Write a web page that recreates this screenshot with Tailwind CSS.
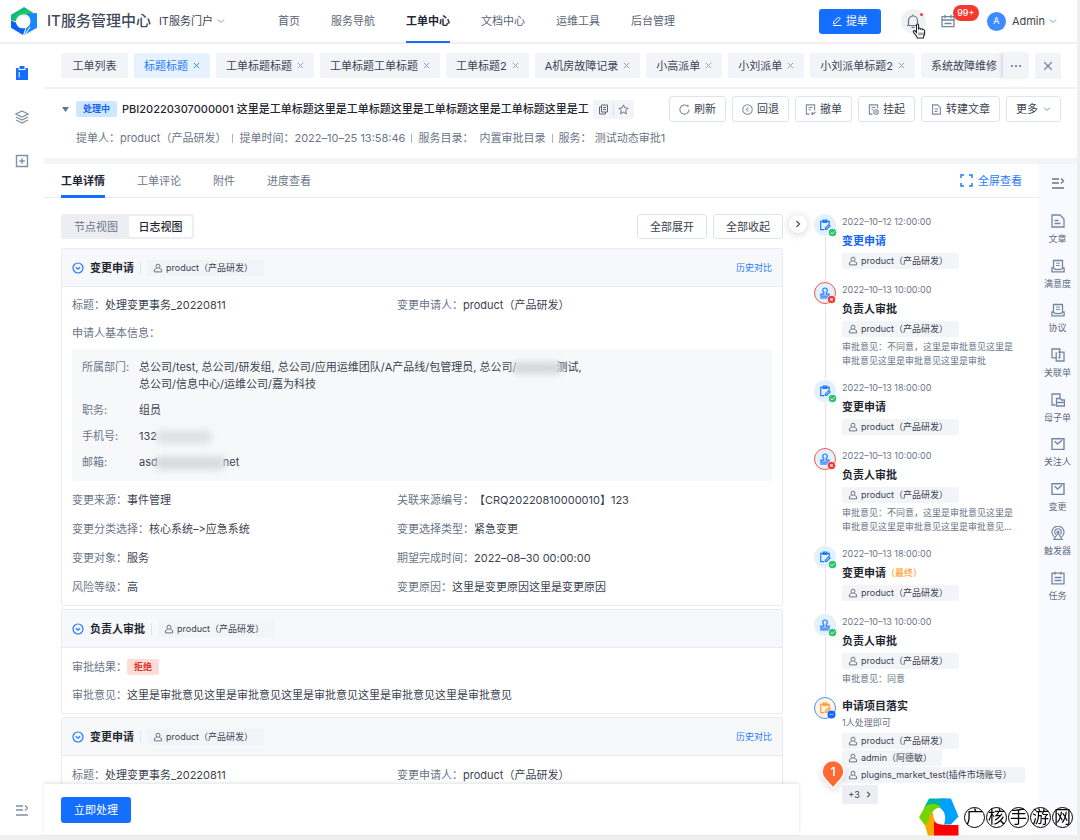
<!DOCTYPE html>
<html lang="zh-CN">
<head>
<meta charset="utf-8">
<title>IT服务管理中心</title>
<script src="https://cdn.jsdelivr.net/npm/@tailwindcss/browser@4"></script>
</head>
<body class="h-screen overflow-hidden bg-[#efeff0] pr-[3px] pb-[5px] font-['Inter','Noto_Sans_CJK_SC',sans-serif] text-[11px] leading-4 text-[#3b4350]">
<svg class="hidden">
  <symbol id="x" viewBox="0 0 8 8"><path d="M1 1l6 6M7 1l-6 6" fill="none" stroke="currentColor" stroke-width="1"/></symbol>
  <symbol id="down" viewBox="0 0 8 8"><path d="M1 2.5l3 3 3-3" fill="none" stroke="currentColor"/></symbol>
  <symbol id="right" viewBox="0 0 8 8"><path d="M2.5 1l3 3-3 3" fill="none" stroke="currentColor" stroke-width="1.2"/></symbol>
  <symbol id="user" viewBox="0 0 10 10"><g fill="none" stroke="currentColor" stroke-width="1"><circle cx="5" cy="3.2" r="2"/><path d="M3.7 5.2L1.4 6.6v2.3h7.2V6.6L6.3 5.2"/></g></symbol>
  <symbol id="fold" viewBox="0 0 12 12"><g fill="none" stroke="currentColor" stroke-width="1.2"><circle cx="6" cy="6" r="5"/><path d="M3.8 5.2L6 7.2l2.2-2"/></g></symbol>
  <symbol id="collapse" viewBox="0 0 14 14"><path d="M1 3h7M1 7h7M1 12h12M10 2.5L12.5 5 10 7.5" fill="none" stroke="currentColor" stroke-width="1.3"/></symbol>
  <symbol id="apply" viewBox="0 0 14 14"><g fill="none" stroke="currentColor" stroke-width="1.4"><path d="M6 12.3H2V2.7h10V6"/><path d="M4.8 1.3h4.4v2.6H4.8zM7.4 10.6l4-4 1.5 1.5-4 4H7.4z"/></g></symbol>
  <symbol id="stamp" viewBox="0 0 14 14"><g fill="none" stroke="currentColor" stroke-width="1.4"><path d="M5.6 8.2V6.2a2.7 2.7 0 1 1 2.8 0v2h3.4v2.5H2.2V8.2z"/><path d="M1.4 12.8h11.2"/></g></symbol>
  <symbol id="ok" viewBox="0 0 10 10"><circle cx="5" cy="5" r="4.5" fill="#2dc26b" stroke="#fff" stroke-width=".8"/><path d="M3 5l1.5 1.5L7.2 3.8" fill="none" stroke="#fff" stroke-width="1.1"/></symbol>
  <symbol id="no" viewBox="0 0 10 10"><circle cx="5" cy="5" r="4.5" fill="#f5392f" stroke="#fff" stroke-width=".8"/><path d="M3.7 3.7l2.6 2.6M6.3 3.7L3.7 6.3" stroke="#fff" stroke-width="1.2"/></symbol>
  <symbol id="todo" viewBox="0 0 10 10"><circle cx="5" cy="5" r="4.5" fill="#1369ff"/><path d="M2.6 5h4.8" stroke="#8fb8ff"/></symbol>
  <symbol id="tray" viewBox="0 0 14 14"><g fill="none" stroke="currentColor" stroke-width="1.3"><path d="M2.5 9.500v-8h9v8M2.500 9H.9v3.800h12.200V9h-1.600M2.500 9.500c2 1.400 7 1.400 9 0"/><path d="M5 4.200h4M5 6.500h4" stroke-width=".9"/></g></symbol>
  <symbol id="mail" viewBox="0 0 14 14"><path d="M1 1.8h12v10.6H1zM3.6 4.2L6.6 7 11 3.2" fill="none" stroke="currentColor" stroke-width="1.4"/></symbol>
</svg>

<div class="flex h-full flex-col bg-white">
  <header class="flex h-[44px] shrink-0 items-center border-b-2 border-[#f0f0f1] pl-[10px] pr-5">
    <svg class="size-[28px] shrink-0" viewBox="0 0 28 28">
      <path d="M1 8L14 .3l9 5.2-3.5 4.2C14 6 7 8.500 6 14.500L1 13z" fill="#22c55e"/>
      <path d="M1 8L14 .3l4.200 2.500C11 3 5 8 4 13.800L1 13z" fill="#0fb981"/>
      <path d="M1 13.500l5 2c1 5 5 6.500 9.500 5.500L13 28 1 20.800z" fill="#0b62f5"/>
      <path d="M16.500 6.500l9.800-.6c.5.3.7.7.7 1.200v13.600L14.300 28l2-7c5-2.500 6-9.500.2-14.500z" fill="#1c86ff"/>
      <path d="M20 20l-4.500 7" stroke="#fff" stroke-width="1"/>
      <path d="M6.500 14.500c.5-5 6-8 11-5.500" fill="none" stroke="#d9ecff" stroke-width="1.500"/>
    </svg>
    <h1 class="ml-[9px] shrink-0 whitespace-nowrap text-[15px] font-medium leading-5 text-[#3f4a5c]">IT服务管理中心</h1>
    <button class="ml-2 flex shrink-0 items-center gap-1 whitespace-nowrap">IT服务门户 <svg class="size-2 text-[#8693a8]"><use href="#down"/></svg></button>
    <nav class="ml-[53px] flex h-[44px] items-center gap-[31px] whitespace-nowrap text-[#5b6575]">
      <a href="#">首页</a><a href="#">服务导航</a>
      <a href="#" class="flex h-full items-center border-y-2 border-t-transparent border-b-[#1a6dff] font-bold text-[#1f2733]">工单中心</a>
      <a href="#">文档中心</a><a href="#">运维工具</a><a href="#">后台管理</a>
    </nav>
    <button class="ml-auto flex h-[25px] w-[62px] shrink-0 items-center justify-center gap-1 rounded-[3px] bg-[#146eff] text-white"><svg class="size-[10px]" viewBox="0 0 10 10" fill="none" stroke="currentColor"><path d="M1.500 6L6.500 1l1.800 1.800-5 5H1.500zM1 9.500h8.500"/></svg>提单</button>
    <button class="relative ml-5 flex size-[25px] shrink-0 items-center justify-center rounded-full bg-[#f0f1f3] text-[#66748a]" aria-label="通知">
      <svg class="size-[14px]" viewBox="0 0 14 14" fill="none" stroke="currentColor" stroke-width="1.200"><path d="M1 11.500h12M2.500 11.500V6.500a4.500 4.500 0 0 1 9 0v5M7 2V.5M5.500 13.300h3"/></svg>
      <span class="absolute right-[3px] top-1 size-[3px] rounded-full bg-[#f5392f]"></span>
      <svg class="absolute left-[11px] top-[14px] h-[16px] w-[15px]" viewBox="0 0 15 16"><path d="M4.500 9.500V2.200c0-1.600 2.100-1.600 2.100 0v3.600c.6-.8 1.900-.6 2.100.3.600-.6 1.800-.4 2 .5.800-.4 1.900.1 1.900 1.200v3c0 1.800-1.200 2.300-1.200 4.200H5.300C5 13 2.800 11.500 1.500 9.300.8 8 2.300 7 3.300 8.100z" fill="#fff" stroke="#222" stroke-width="1.100"/><path d="M7 9.500v2.800M9 9.500v2.800M11 9.500v2.800" stroke="#222" stroke-width=".8"/></svg>
    </button>
    <button class="relative ml-[15px] shrink-0 text-[#7484a0]" aria-label="日程">
      <svg class="size-[14px]" viewBox="0 0 14 14" fill="none" stroke="currentColor" stroke-width="1.300"><path d="M1 2.700h12v10H1zM1 6h12M4 .7v3.500M10 .7v3.500M3.500 9.500h7"/></svg>
      <span class="absolute -top-[9px] left-3 flex h-4 w-[26px] items-center justify-center rounded-full bg-[#f5392f] text-[9px] font-medium text-white">99+</span>
    </button>
    <span class="ml-8 flex size-[19px] shrink-0 items-center justify-center rounded-full bg-[#3d8bff] text-[9px] text-white">A</span>
    <button class="ml-[6px] flex items-center gap-1">Admin <svg class="size-2 text-[#8693a8]"><use href="#down"/></svg></button>
  </header>

  <div class="flex min-h-0 flex-1">
    <aside class="flex w-[44px] shrink-0 flex-col items-center gap-[30px] pb-[18px] pt-[22px] text-[#8090a8]">
      <button aria-label="工单" class="text-[#146eff]"><svg class="size-[14px]" viewBox="0 0 14 14" fill="currentColor"><path d="M1 2h2.500v2h7V2H13v12H1z"/><path d="M4.500 0h5v3h-5z"/><path d="M4.200 6v5.500" stroke="#fff"/></svg></button>
      <button aria-label="图层"><svg class="size-[14px]" viewBox="0 0 14 14" fill="none" stroke="currentColor" stroke-width="1.200"><path d="M7 1l6 3-6 3-6-3zM1 7l6 3 6-3M1 10l6 3 6-3"/></svg></button>
      <button aria-label="新增"><svg class="size-[14px]" viewBox="0 0 14 14" fill="none" stroke="currentColor" stroke-width="1.400"><path d="M1.500 1.500h11v11h-11zM7 4.300v5.400M4.300 7h5.400"/></svg></button>
      <button aria-label="展开菜单" class="mt-auto"><svg class="size-[14px]"><use href="#collapse"/></svg></button>
    </aside>

    <div class="flex min-w-0 flex-1 flex-col">
      <div class="flex h-[45px] shrink-0 items-center border-b-2 border-[#f0f1f4] pl-[17px] pr-4">
        <div class="flex min-w-0 flex-1 gap-[6px] overflow-hidden whitespace-nowrap *:flex *:h-[25px] *:shrink-0 *:items-center *:gap-[5px] *:rounded-xs *:bg-[#f3f4f8] *:px-[10px]">
          <button class="w-[67px] justify-center">工单列表</button>
          <button class="bg-[#e6f2ff]! text-[#1f7aff]">标题标题<svg class="size-[7px]"><use href="#x"/></svg></button>
          <button>工单标题标题<svg class="size-[7px] text-[#8693a8]"><use href="#x"/></svg></button>
          <button>工单标题工单标题<svg class="size-[7px] text-[#8693a8]"><use href="#x"/></svg></button>
          <button>工单标题2<svg class="size-[7px] text-[#8693a8]"><use href="#x"/></svg></button>
          <button>A机房故障记录<svg class="size-[7px] text-[#8693a8]"><use href="#x"/></svg></button>
          <button>小高派单<svg class="size-[7px] text-[#8693a8]"><use href="#x"/></svg></button>
          <button>小刘派单<svg class="size-[7px] text-[#8693a8]"><use href="#x"/></svg></button>
          <button>小刘派单标题2<svg class="size-[7px] text-[#8693a8]"><use href="#x"/></svg></button>
          <button>系统故障维修<svg class="size-[7px] text-[#8693a8]"><use href="#x"/></svg></button>
        </div>
        <button aria-label="更多标签" class="z-10 flex h-[25px] w-[26px] shrink-0 items-center justify-center bg-[#f3f4f8] text-[#8390a6] shadow-[-2px_0_3px_rgba(0,0,0,0.1)]"><svg class="h-[2px] w-[10px]" viewBox="0 0 10 2" fill="currentColor"><path d="M0 0h2v2H0zM4 0h2v2H4zM8 0h2v2H8z"/></svg></button>
        <button aria-label="关闭" class="ml-[6px] flex h-[26px] w-[26px] shrink-0 items-center justify-center bg-[#f3f4f8] text-[#76849c]"><svg class="size-[10px]"><use href="#x"/></svg></button>
      </div>

      <section class="flex h-[75px] shrink-0 flex-col gap-2 border-b-[6px] border-[#f3f4f8] pl-[18px] pr-4 pt-[7px]">
        <div class="flex items-center whitespace-nowrap">
          <svg class="h-[5px] w-[7px] shrink-0" viewBox="0 0 7 5"><path d="M0 0h7L3.500 5z" fill="#66748a"/></svg>
          <span class="ml-[7px] flex h-4 w-[41px] shrink-0 items-center justify-center rounded-xs bg-[#cfe6ff] text-[9px] font-bold text-[#1464f0]">处理中</span>
          <h2 class="ml-[5px] shrink-0 font-medium text-[#1f2733]">PBI20220307000001 这里是工单标题这里是工单标题这里是工单标题这里是工单标题这里是工</h2>
          <div class="ml-1 flex h-[19px] shrink-0 items-center rounded-xs bg-[#f3f4f8] px-[5px] text-[#5d6879]">
            <button aria-label="复制"><svg class="size-[11px]" viewBox="0 0 11 11" fill="none" stroke="currentColor"><path d="M3.500 1h6v7h-6zM3.500 3h-2v7h6V8M5 3.500h3M5 5.500h3"/></svg></button>
            <span class="mx-1 h-3 w-px bg-[#dde1e8]"></span>
            <button aria-label="收藏"><svg class="size-[11px]" viewBox="0 0 12 12" fill="none" stroke="currentColor"><path d="M6 1l1.500 3.200 3.500.5-2.500 2.500.6 3.500L6 9l-3.100 1.700.6-3.500L1 4.700l3.500-.5z"/></svg></button>
          </div>
          <div class="ml-auto flex gap-[6px] *:flex *:h-[26px] *:items-center *:gap-1 *:rounded-[3px] *:border *:border-[#dfe4ec] *:px-[9px]">
            <button><svg class="size-[11px] text-[#7c8aa0]" viewBox="0 0 12 12" fill="none" stroke="currentColor" stroke-width="1.200"><path d="M11 6a5 5 0 1 1-1.500-3.500M9.800.8v2.400"/></svg>刷新</button>
            <button><svg class="size-[11px] text-[#7c8aa0]" viewBox="0 0 12 12" fill="none" stroke="currentColor" stroke-width="1.100"><circle cx="6" cy="6" r="5.200"/><path d="M7 3.800L4.800 6 7 8.200"/></svg>回退</button>
            <button><svg class="size-[11px] text-[#7c8aa0]" viewBox="0 0 12 12" fill="none" stroke="currentColor" stroke-width="1.200"><path d="M5 11H1.500V1h9v6M3.800 3.800h4.500M3.800 6.300h3M7 10.500h2.500l2-2M7 10.500L8.500 9M7 10.500L8.500 12"/></svg>撤单</button>
            <button><svg class="size-[11px] text-[#7c8aa0]" viewBox="0 0 12 12" fill="none" stroke="currentColor" stroke-width="1.200"><path d="M5 11H1.500V1h9v4M3.800 3.800h4.500M3.800 6.300h2"/><circle cx="8.700" cy="8.700" r="2.500"/><path d="M7.500 8.700h2.400"/></svg>挂起</button>
            <button><svg class="size-[11px] text-[#7c8aa0]" viewBox="0 0 12 12" fill="none" stroke="currentColor" stroke-width="1.200"><path d="M1.700 1h5.600l3 3v7H1.700zM4 5.500h4M4 8h3"/></svg>转建文章</button>
            <button>更多<svg class="ml-px size-2 text-[#8693a8]"><use href="#down"/></svg></button>
          </div>
        </div>
        <div class="flex items-center gap-[6px] whitespace-nowrap pl-[14px] text-[#6b7586]">
          <span>提单人：product（产品研发）</span><span class="h-[9px] w-px bg-[#a9b2c0]"></span>
          <span>提单时间：2022–10–25 13:58:46</span><span class="h-[9px] w-px bg-[#a9b2c0]"></span>
          <span>服务目录：&nbsp; 内置审批目录</span><span class="h-[9px] w-px bg-[#a9b2c0]"></span>
          <span>服务： 测试动态审批1</span>
        </div>
      </section>

      <div class="flex min-h-0 flex-1">
        <div class="flex min-w-0 flex-1 flex-col">
          <div class="flex h-[34px] shrink-0 items-center gap-8 border-b border-[#e9ebf0] pl-[17px] pr-4 text-[#6b7586]">
            <a href="#" class="flex h-[34px] items-center border-y-[3px] border-t-transparent border-b-[#146eff] font-bold text-[#1f2733]">工单详情</a>
            <a href="#">工单评论</a><a href="#">附件</a><a href="#">进度查看</a>
            <a href="#" class="ml-auto flex items-center gap-[5px] text-[#1f7aff]"><svg class="size-[13px]" viewBox="0 0 13 13" fill="none" stroke="currentColor" stroke-width="1.500"><path d="M1 4V1h3M9 1h3v3M12 9v3H9M4 12H1V9"/></svg>全屏查看</a>
          </div>

          <div class="flex min-h-0 flex-1">
            <main class="relative flex min-w-0 flex-1 flex-col">
              <div class="flex min-h-0 flex-1 flex-col gap-[3px] overflow-hidden pl-[17px] pr-4 pt-4">
                <div class="mb-[6px] flex shrink-0 items-center gap-[6px]">
                  <div class="mr-auto flex h-[25px] items-center rounded-[3px] bg-[#eceef3] p-[2px] text-[#6b7586]">
                    <button class="w-[66px]">节点视图</button>
                    <button class="h-full w-[63px] rounded-xs bg-white font-medium text-[#1f2733]">日志视图</button>
                  </div>
                  <button class="h-[25px] w-[70px] rounded-[3px] border border-[#dfe4ec]">全部展开</button>
                  <button class="h-[25px] w-[70px] rounded-[3px] border border-[#dfe4ec]">全部收起</button>
                </div>

                <article class="shrink-0 rounded-xs border border-[#e8ebf0] pb-1">
                  <header class="flex h-[38px] items-center border-b border-[#e8ebf0] bg-[#f7f8fa] px-[10px]">
                    <svg class="size-3 text-[#1f7aff]"><use href="#fold"/></svg>
                    <h3 class="ml-[6px] font-bold text-[#1f2733]">变更申请</h3>
                    <span class="ml-[6px] h-3 w-px bg-[#dfe3ea]"></span>
                    <span class="ml-[6px] flex h-4 w-[117px] items-center gap-[3px] rounded-xs bg-[#f3f4f8] pl-[6px] text-[9px]"><svg class="size-[10px] text-[#6b7586]"><use href="#user"/></svg>product（产品研发）</span>
                    <a href="#" class="ml-auto text-[9px] text-[#1f7aff]">历史对比</a>
                  </header>
                  <div class="px-[10px] pt-1">
                    <dl class="grid grid-cols-[325px_1fr] *:flex *:h-7 *:items-center">
                      <div><dt class="text-[#6b7586]">标题：</dt><dd>处理变更事务_20220811</dd></div>
                      <div><dt class="text-[#6b7586]">变更申请人：</dt><dd>product（产品研发）</dd></div>
                      <div><dt class="text-[#6b7586]">申请人基本信息：</dt></div>
                    </dl>
                    <dl class="mt-[2px] grid grid-cols-[57px_1fr] gap-y-[9px] rounded-xs bg-[#f7f8fa] px-[10px] py-[10px] leading-[17px]">
                      <dt class="text-[#6b7586]">所属部门:</dt>
                      <dd>总公司/test, 总公司/研发组, 总公司/应用运维团队/A产品线/包管理员, 总公司/<span class="-ml-1 -mr-[6px] inline-block h-3 w-[50px] rounded-full bg-[#d5d9dc] align-middle blur-[3px]"></span>测试,<br>总公司/信息中心/运维公司/嘉为科技</dd>
                      <dt class="text-[#6b7586]">职务:</dt><dd>组员</dd>
                      <dt class="text-[#6b7586]">手机号:</dt><dd class="flex items-center">132<span class="-ml-px h-[14px] w-[56px] rounded-full bg-[#dfe2e5] blur-[3px]"></span></dd>
                      <dt class="text-[#6b7586]">邮箱:</dt><dd class="flex items-center">asd<span class="-ml-1 -mr-[3px] h-[14px] w-[72px] rounded-full bg-[#d9dcdf] blur-[3px]"></span>net</dd>
                    </dl>
                    <dl class="mt-1 grid grid-cols-[325px_1fr] [font-variant-ligatures:none] *:flex *:h-[29px] *:items-center">
                      <div><dt class="text-[#6b7586]">变更来源：</dt><dd>事件管理</dd></div>
                      <div><dt class="text-[#6b7586]">关联来源编号：</dt><dd>【CRQ20220810000010】123</dd></div>
                      <div><dt class="text-[#6b7586]">变更分类选择：</dt><dd>核心系统–&gt;应急系统</dd></div>
                      <div><dt class="text-[#6b7586]">变更选择类型：</dt><dd>紧急变更</dd></div>
                      <div><dt class="text-[#6b7586]">变更对象：</dt><dd>服务</dd></div>
                      <div><dt class="text-[#6b7586]">期望完成时间：</dt><dd>2022–08–30 00:00:00</dd></div>
                      <div><dt class="text-[#6b7586]">风险等级：</dt><dd>高</dd></div>
                      <div><dt class="text-[#6b7586]">变更原因：</dt><dd>这里是变更原因这里是变更原因</dd></div>
                    </dl>
                  </div>
                </article>

                <article class="shrink-0 rounded-xs border border-[#e8ebf0] pb-1">
                  <header class="flex h-[38px] items-center border-b border-[#e8ebf0] bg-[#f7f8fa] px-[10px]">
                    <svg class="size-3 text-[#1f7aff]"><use href="#fold"/></svg>
                    <h3 class="ml-[6px] font-bold text-[#1f2733]">负责人审批</h3>
                    <span class="ml-[6px] h-3 w-px bg-[#dfe3ea]"></span>
                    <span class="ml-[6px] flex h-4 w-[117px] items-center gap-[3px] rounded-xs bg-[#f3f4f8] pl-[6px] text-[9px]"><svg class="size-[10px] text-[#6b7586]"><use href="#user"/></svg>product（产品研发）</span>
                  </header>
                  <dl class="px-[10px] pt-[5px] *:flex *:h-7 *:items-center">
                    <div><dt class="text-[#6b7586]">审批结果：</dt><dd class="flex h-4 w-8 items-center justify-center rounded-xs bg-[#ffdcd6] text-[9px] font-bold text-[#d9352c]">拒绝</dd></div>
                    <div><dt class="text-[#6b7586]">审批意见：</dt><dd>这里是审批意见这里是审批意见这里是审批意见这里是审批意见这里是审批意见</dd></div>
                  </dl>
                </article>

                <article class="shrink-0 rounded-xs border border-[#e8ebf0]">
                  <header class="flex h-[38px] items-center border-b border-[#e8ebf0] bg-[#f7f8fa] px-[10px]">
                    <svg class="size-3 text-[#1f7aff]"><use href="#fold"/></svg>
                    <h3 class="ml-[6px] font-bold text-[#1f2733]">变更申请</h3>
                    <span class="ml-[6px] h-3 w-px bg-[#dfe3ea]"></span>
                    <span class="ml-[6px] flex h-4 w-[117px] items-center gap-[3px] rounded-xs bg-[#f3f4f8] pl-[6px] text-[9px]"><svg class="size-[10px] text-[#6b7586]"><use href="#user"/></svg>product（产品研发）</span>
                    <a href="#" class="ml-auto text-[9px] text-[#1f7aff]">历史对比</a>
                  </header>
                  <dl class="grid grid-cols-[325px_1fr] px-[10px] pt-[5px] *:flex *:h-7 *:items-center">
                    <div><dt class="text-[#6b7586]">标题：</dt><dd>处理变更事务_20220811</dd></div>
                    <div><dt class="text-[#6b7586]">变更申请人：</dt><dd>product（产品研发）</dd></div>
                  </dl>
                </article>
              </div>
              <footer class="z-10 flex h-[51px] shrink-0 items-center bg-white pl-[17px] shadow-[0_-1px_4px_rgba(0,0,0,0.12)]">
                <button class="h-[26px] w-[70px] rounded-[3px] bg-[#146eff] text-white">立即处理</button>
              </footer>
              <button aria-label="收起流程" class="absolute -right-2 top-[17px] z-20 flex size-[18px] items-center justify-center rounded-full bg-white text-[#4a5361] shadow-[0_1px_8px_rgba(0,0,0,0.18)]"><svg class="size-2"><use href="#right"/></svg></button>
            </main>

            <ol class="w-[239px] shrink-0 overflow-hidden pl-[15px] pt-4 text-[9px] leading-[14px] text-[#6b7586] *:flex *:gap-[6px]">
              <li class="h-[68px]">
                <div class="flex w-[22px] flex-col items-center"><span class="relative flex size-[22px] shrink-0 items-center justify-center rounded-full bg-[#e3f0ff] text-[#1f7aff]"><svg class="size-3"><use href="#apply"/></svg><svg class="absolute -bottom-px -right-px size-[9px]"><use href="#ok"/></svg></span><span class="my-px w-px flex-1 bg-[#dfe5ee]"></span></div>
                <div><time class="flex h-4 items-center">2022–10–12 12:00:00</time><h4 class="flex h-[22px] items-center text-[11px] font-bold text-[#1464f0]">变更申请</h4><span class="mt-px flex h-4 w-[117px] items-center gap-[3px] rounded-xs bg-[#f3f4f8] pl-[6px] text-[#3b4350]"><svg class="size-[10px] text-[#6b7586]"><use href="#user"/></svg>product（产品研发）</span></div>
              </li>
              <li class="h-[98px]">
                <div class="flex w-[22px] flex-col items-center"><span class="relative flex size-[22px] shrink-0 items-center justify-center rounded-full border border-[#f5564d] bg-[#e3f0ff] text-[#1f7aff]"><svg class="size-3"><use href="#stamp"/></svg><svg class="absolute -bottom-px -right-px size-[9px]"><use href="#no"/></svg></span><span class="my-px w-px flex-1 bg-[#dfe5ee]"></span></div>
                <div><time class="flex h-4 items-center">2022–10–13 10:00:00</time><h4 class="flex h-[22px] items-center text-[11px] font-bold text-[#1f2733]">负责人审批</h4><span class="mb-[3px] mt-px flex h-4 w-[117px] items-center gap-[3px] rounded-xs bg-[#f3f4f8] pl-[6px] text-[#3b4350]"><svg class="size-[10px] text-[#6b7586]"><use href="#user"/></svg>product（产品研发）</span><p>审批意见：不同意，这里是审批意见这里是<br>审批意见这里是审批意见这里是审批</p></div>
              </li>
              <li class="h-[68px]">
                <div class="flex w-[22px] flex-col items-center"><span class="relative flex size-[22px] shrink-0 items-center justify-center rounded-full bg-[#e3f0ff] text-[#1f7aff]"><svg class="size-3"><use href="#apply"/></svg><svg class="absolute -bottom-px -right-px size-[9px]"><use href="#ok"/></svg></span><span class="my-px w-px flex-1 bg-[#dfe5ee]"></span></div>
                <div><time class="flex h-4 items-center">2022–10–13 18:00:00</time><h4 class="flex h-[22px] items-center text-[11px] font-bold text-[#1f2733]">变更申请</h4><span class="mt-px flex h-4 w-[117px] items-center gap-[3px] rounded-xs bg-[#f3f4f8] pl-[6px] text-[#3b4350]"><svg class="size-[10px] text-[#6b7586]"><use href="#user"/></svg>product（产品研发）</span></div>
              </li>
              <li class="h-[98px]">
                <div class="flex w-[22px] flex-col items-center"><span class="relative flex size-[22px] shrink-0 items-center justify-center rounded-full border border-[#f5564d] bg-[#e3f0ff] text-[#1f7aff]"><svg class="size-3"><use href="#stamp"/></svg><svg class="absolute -bottom-px -right-px size-[9px]"><use href="#no"/></svg></span><span class="my-px w-px flex-1 bg-[#dfe5ee]"></span></div>
                <div><time class="flex h-4 items-center">2022–10–13 10:00:00</time><h4 class="flex h-[22px] items-center text-[11px] font-bold text-[#1f2733]">负责人审批</h4><span class="mb-[3px] mt-px flex h-4 w-[117px] items-center gap-[3px] rounded-xs bg-[#f3f4f8] pl-[6px] text-[#3b4350]"><svg class="size-[10px] text-[#6b7586]"><use href="#user"/></svg>product（产品研发）</span><p>审批意见：不同意，这里是审批意见这里是<br>审批意见这里是审批意见这里是审批意见...</p></div>
              </li>
              <li class="h-[68px]">
                <div class="flex w-[22px] flex-col items-center"><span class="relative flex size-[22px] shrink-0 items-center justify-center rounded-full bg-[#e3f0ff] text-[#1f7aff]"><svg class="size-3"><use href="#apply"/></svg><svg class="absolute -bottom-px -right-px size-[9px]"><use href="#ok"/></svg></span><span class="my-px w-px flex-1 bg-[#dfe5ee]"></span></div>
                <div><time class="flex h-4 items-center">2022–10–13 18:00:00</time><h4 class="flex h-[22px] items-center text-[11px] font-bold text-[#1f2733]">变更申请<span class="text-[9px] font-medium text-[#ff9f38]">（最终）</span></h4><span class="mt-px flex h-4 w-[117px] items-center gap-[3px] rounded-xs bg-[#f3f4f8] pl-[6px] text-[#3b4350]"><svg class="size-[10px] text-[#6b7586]"><use href="#user"/></svg>product（产品研发）</span></div>
              </li>
              <li class="h-[83px]">
                <div class="flex w-[22px] flex-col items-center"><span class="relative flex size-[22px] shrink-0 items-center justify-center rounded-full bg-[#e3f0ff] text-[#1f7aff]"><svg class="size-3"><use href="#stamp"/></svg><svg class="absolute -bottom-px -right-px size-[9px]"><use href="#ok"/></svg></span><span class="my-px w-px flex-1 bg-[#dfe5ee]"></span></div>
                <div><time class="flex h-4 items-center">2022–10–13 10:00:00</time><h4 class="flex h-[22px] items-center text-[11px] font-bold text-[#1f2733]">负责人审批</h4><span class="mb-[3px] mt-px flex h-4 w-[117px] items-center gap-[3px] rounded-xs bg-[#f3f4f8] pl-[6px] text-[#3b4350]"><svg class="size-[10px] text-[#6b7586]"><use href="#user"/></svg>product（产品研发）</span><p>审批意见：同意</p></div>
              </li>
              <li>
                <div class="relative w-[22px]"><span class="relative flex size-[22px] items-center justify-center rounded-full border border-[#4c92ff] bg-[#fff3e3] text-[#ff9f38]"><svg class="size-3"><use href="#apply"/></svg><svg class="absolute -bottom-px -right-px size-[9px]"><use href="#todo"/></svg></span>
                  <svg class="absolute left-[6px] top-[62px] z-10 h-[32px] w-[26px] drop-shadow-md" viewBox="0 0 26 32"><path d="M13 29L5 20a11 11 0 1 1 16 0z" fill="#ff6a33" stroke="#fff" stroke-width="1.500"/><text x="13" y="17" text-anchor="middle" font-size="12" font-weight="600" fill="#fff">1</text></svg>
                </div>
                <div class="flex flex-col items-start gap-px text-[#3b4350]">
                  <h4 class="flex h-[18px] items-center text-[11px] font-bold text-[#1f2733]">申请项目落实</h4>
                  <p class="h-4 text-[#6b7586]">1人处理即可</p>
                  <span class="flex h-4 w-[117px] items-center gap-[3px] rounded-xs bg-[#f3f4f8] pl-[6px]"><svg class="size-[10px] text-[#6b7586]"><use href="#user"/></svg>product（产品研发）</span>
                  <span class="flex h-4 w-[100px] items-center gap-[3px] rounded-xs bg-[#f3f4f8] pl-[6px]"><svg class="size-[10px] text-[#6b7586]"><use href="#user"/></svg>admin（阿德敏）</span>
                  <span class="flex h-4 w-[183px] items-center gap-[3px] rounded-xs bg-[#f3f4f8] pl-[6px]"><svg class="size-[10px] text-[#6b7586]"><use href="#user"/></svg>plugins_market_test(插件市场账号）</span>
                  <button class="mt-px flex h-[19px] w-9 items-center justify-center gap-[5px] rounded-xs bg-[#eceef3]">+3<svg class="size-[7px]"><use href="#right"/></svg></button>
                </div>
              </li>
            </ol>
          </div>
        </div>

        <aside class="w-[39px] shrink-0 bg-[#f9faff] pt-3 text-[9px] text-[#5f6b80]">
          <button aria-label="收起工具栏" class="mx-auto block text-[#66748a]"><svg class="size-[14px]"><use href="#collapse"/></svg></button>
          <div class="mt-6 flex h-[390px] flex-col justify-between *:flex *:flex-col *:items-center *:gap-[3px] *:whitespace-nowrap *:leading-4">
            <button><svg class="size-[14px] text-[#7485a3]" viewBox="0 0 14 14" fill="none" stroke="currentColor" stroke-width="1.300"><path d="M1 1h8l4 4v8H1zM3.500 6.500h4M3.500 9.500h6"/></svg>文章</button>
            <button><svg class="size-[14px] text-[#7485a3]"><use href="#tray"/></svg>满意度</button>
            <button><svg class="size-[14px] text-[#7485a3]"><use href="#tray"/></svg>协议</button>
            <button><svg class="size-[14px] text-[#7485a3]" viewBox="0 0 14 14" fill="none" stroke="currentColor" stroke-width="1.300"><path d="M4.500 9.800H1V1h7.800v8.800H7M7 4.200h6V13H5.200V4.200"/></svg>关联单</button>
            <button><svg class="size-[14px] text-[#7485a3]" viewBox="0 0 14 14" fill="none" stroke="currentColor" stroke-width="1.300"><path d="M4.500 12H1V1h8v4M5.500 7V5.500h4L10.500 7h3v6h-8zM5.500 9.500h8"/></svg>母子单</button>
            <button><svg class="size-[14px] text-[#7485a3]"><use href="#mail"/></svg>关注人</button>
            <button><svg class="size-[14px] text-[#7485a3]"><use href="#mail"/></svg>变更</button>
            <button><svg class="size-[14px] text-[#7485a3]" viewBox="0 0 14 14" fill="none" stroke="currentColor" stroke-width="1.200"><path d="M3.500 11A6 6 0 1 1 10.500 11M4.800 8.500a3.300 3.300 0 1 1 4.400 0M7 7l4 6.300H3z"/><circle cx="7" cy="6" r="1"/></svg>触发器</button>
            <button><svg class="size-[14px] text-[#7485a3]" viewBox="0 0 14 14" fill="none" stroke="currentColor" stroke-width="1.300"><path d="M1 2.200h12v10.600H1zM4 .7v3M10 .7v3M3.500 6.500h7M3.500 9.500h7"/></svg>任务</button>
          </div>
        </aside>
      </div>
    </div>
  </div>
</div>

<div class="fixed bottom-1 right-[7px] z-30 flex items-center gap-[5px]">
  <svg class="h-[38px] w-[40px]" viewBox="0 0 40 38">
    <path d="M10 .5h17l-3 12C20 7 13 7 5 10z" fill="#00b3a6"/>
    <path d="M21 .5h11l7.500 18-7.500 8h-7c2-6 2-12-4-17z" fill="#00a0ff"/>
    <path d="M0 19.500L6 8.500c6-4 13-3 16 1-7 0-11 6-11 13l-5 5z" fill="#76d500"/>
    <path d="M10 22c0-3 1-6 4-8 0 5 1 8 4 12l-3 11.500H9L6 27.500z" fill="#ffa500"/>
    <path d="M15 23c3 4 8 4 24.500 4v10.500H15z" fill="#f00"/>
  </svg>
  <div class="flex gap-px text-[17px] leading-none text-black *:flex *:size-[21px] *:items-center *:justify-center *:rounded-full *:border-[1.5px] *:border-black *:bg-white">
    <span>广</span><span>核</span><span>手</span><span>游</span><span>网</span>
  </div>
</div>
</body>
</html>
